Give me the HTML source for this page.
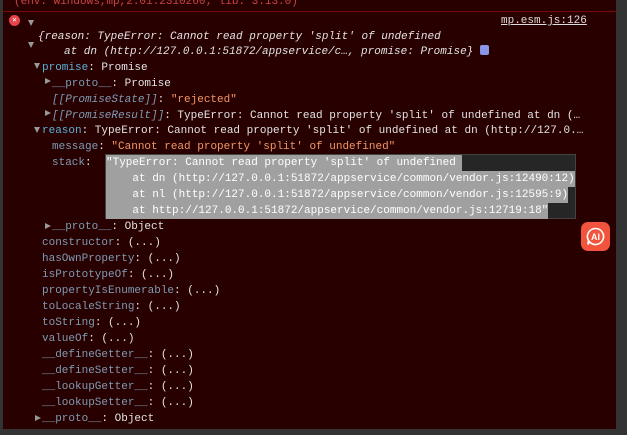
<!DOCTYPE html>
<html><head><style>
body{margin:0;width:627px;height:435px;overflow:hidden;background:#333;position:relative;font-family:"Liberation Mono",monospace;font-size:11px;color:#e3e3e3}
#bg{position:absolute;left:3px;top:0;width:613px;height:429px;background:#280000}
.l{position:absolute;white-space:pre;line-height:16px;height:16px}
.k{color:#5db0d7}.d{color:#7f9bb3}.s{color:#f29766}.i{font-style:italic}
.t{position:absolute;width:0;height:0}
.tr{border-left:3.5px solid transparent;border-right:3.5px solid transparent;border-top:6px solid #999}
.tri{border-top:3.5px solid transparent;border-bottom:3.5px solid transparent;border-left:6px solid #999}
.hl{background:#a0a0a0;color:#fff}
</style></head><body>
<div id="bg"></div>
<div class="l" style="left:14px;top:-6px;color:#c44">(env: Windows,mp,2.01.2310260; lib: 3.13.0)</div>
<div style="position:absolute;left:3px;top:11px;width:613px;height:1px;background:#7a0a0a"></div>
<div style="position:absolute;left:9px;top:15px;width:11px;height:11px;border-radius:50%;background:#e8434a;color:#fff;font-size:8px;line-height:11px;text-align:center">✕</div>
<div class="t tr" style="left:28px;top:20px"></div>
<div class="l" style="left:501px;top:13px;text-decoration:underline;color:#ddd">mp.esm.js:126</div>
<div class="t tr" style="left:28px;top:42px"></div>
<div class="l i" style="left:38px;top:29px">{reason: TypeError: Cannot read property 'split' of undefined</div>
<div class="l i" style="left:64px;top:44px">at dn (http://127.0.0.1:51872/appservice/c…, promise: Promise} <span style="display:inline-block;width:9px;height:10px;background:#8b95e8;border-radius:2px;vertical-align:-1px"></span></div>
<div class="t tr" style="left:34px;top:63px"></div>
<div class="l" style="left:42px;top:60px"><span class="k">promise</span>: Promise</div>
<div class="t tri" style="left:45px;top:78px"></div>
<div class="l" style="left:52px;top:76px"><span class="d">__proto__</span>: Promise</div>
<div class="l" style="left:52px;top:92px"><span class="d i">[[PromiseState]]</span>: <span class="s">"rejected"</span></div>
<div class="t tri" style="left:45px;top:110px"></div>
<div class="l" style="left:52px;top:108px"><span class="d i">[[PromiseResult]]</span>: TypeError: Cannot read property 'split' of undefined at dn (…</div>
<div class="t tr" style="left:34px;top:127px"></div>
<div class="l" style="left:42px;top:123px"><span class="k">reason</span>: TypeError: Cannot read property 'split' of undefined at dn (http://127.0.…</div>
<div class="l" style="left:52px;top:139px"><span class="d">message</span>: <span class="s">"Cannot read property 'split' of undefined"</span></div>
<div class="l" style="left:52px;top:155px"><span class="d">stack</span>:</div>
<div style="position:absolute;left:105px;top:154px;width:471px;height:65px;background:#262626;border:1px solid #444;box-sizing:border-box"></div>
<div class="l hl" style="left:106px;top:155px">"TypeError: Cannot read property 'split' of undefined </div>
<div class="l hl" style="left:106px;top:171px">    at dn (http://127.0.0.1:51872/appservice/common/vendor.js:12490:12)</div>
<div class="l hl" style="left:106px;top:187px">    at nl (http://127.0.0.1:51872/appservice/common/vendor.js:12595:9)</div>
<div class="l hl" style="left:106px;top:203px">    at http://127.0.0.1:51872/appservice/common/vendor.js:12719:18"</div>
<div class="t tri" style="left:45px;top:223px"></div>
<div class="l" style="left:52px;top:219px"><span class="d">__proto__</span>: Object</div>
<div class="l" style="left:42px;top:235px"><span class="d">constructor</span>: (...)</div>
<div class="l" style="left:42px;top:251px"><span class="d">hasOwnProperty</span>: (...)</div>
<div class="l" style="left:42px;top:267px"><span class="d">isPrototypeOf</span>: (...)</div>
<div class="l" style="left:42px;top:283px"><span class="d">propertyIsEnumerable</span>: (...)</div>
<div class="l" style="left:42px;top:299px"><span class="d">toLocaleString</span>: (...)</div>
<div class="l" style="left:42px;top:315px"><span class="d">toString</span>: (...)</div>
<div class="l" style="left:42px;top:331px"><span class="d">valueOf</span>: (...)</div>
<div class="l" style="left:42px;top:347px"><span class="d">__defineGetter__</span>: (...)</div>
<div class="l" style="left:42px;top:363px"><span class="d">__defineSetter__</span>: (...)</div>
<div class="l" style="left:42px;top:379px"><span class="d">__lookupGetter__</span>: (...)</div>
<div class="l" style="left:42px;top:395px"><span class="d">__lookupSetter__</span>: (...)</div>
<div class="t tri" style="left:35px;top:415px"></div>
<div class="l" style="left:42px;top:411px"><span class="d">__proto__</span>: Object</div>
<div style="position:absolute;left:581px;top:222px;width:29px;height:29px;border-radius:7px;background:#f2533c"></div>
<svg style="position:absolute;left:581px;top:222px" width="29" height="29" viewBox="0 0 29 29"><path d="M14.5 6.5a8 8 0 1 1-6.2 13l-1.3 3 0.4-4.2A8 8 0 0 1 14.5 6.5z" fill="none" stroke="#fff" stroke-width="1.6"/><text x="14.5" y="18" text-anchor="middle" font-family="Liberation Sans" font-weight="bold" font-size="9" fill="#fff">AI</text></svg>
</body></html>
